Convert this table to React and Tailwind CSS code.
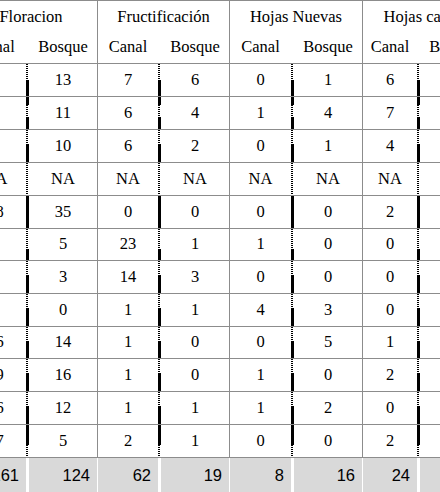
import React from "react";

const groups = [
  { name: "Floracion", canal: "w-[61px]" },
  { name: "Fructificación", canal: "w-[60px]" },
  { name: "Hojas Nuevas", canal: "w-[61px]" },
  { name: "Hojas caídas", canal: "w-[54px]" },
];

// canal / bosque pairs per group
const rows = [
  [9, 13, 7, 6, 0, 1, 6, 2],
  [9, 11, 6, 4, 1, 4, 7, 3],
  [8, 10, 6, 2, 0, 1, 4, 1],
  ["NA", "NA", "NA", "NA", "NA", "NA", "NA", "NA"],
  [38, 35, 0, 0, 0, 0, 2, 0],
  [9, 5, 23, 1, 1, 0, 0, 1],
  [3, 3, 14, 3, 0, 0, 0, 0],
  [7, 0, 1, 1, 4, 3, 0, 2],
  [26, 14, 1, 0, 0, 5, 1, 1],
  [19, 16, 1, 0, 1, 0, 2, 0],
  [16, 12, 1, 1, 1, 2, 0, 1],
  [17, 5, 2, 1, 0, 0, 2, 0],
];

const totals = [161, 124, 62, 19, 8, 16, 24, 12];

// content height of each row (border comes on top)
const heights = [32, 32, 32, 32, 32, 31, 32, 32, 31, 32, 32, 32];
const rowClass = [
  "h-[33px]", "h-[33px]", "h-[33px]", "h-[33px]", "h-[33px]", "h-[32px]",
  "h-[33px]", "h-[33px]", "h-[32px]", "h-[33px]", "h-[33px]", "h-[33px]",
];

// dotted (d) / solid (s) stretches of the thick Canal|Bosque line: [kind, from, to]
const patterns = [
  [["d", 0, 16], ["s", 16, 32]],
  [["s", 0, 8], ["d", 8, 20], ["s", 20, 32]],
  [["d", 0, 14], ["s", 14, 32]],
  [["d", 0, 32]],
  [["s", 0, 32]],
  [["d", 0, 20], ["s", 20, 31]],
  [["d", 0, 14], ["s", 14, 32]],
  [["d", 0, 14], ["s", 14, 32]],
  [["d", 0, 14], ["s", 14, 31]],
  [["d", 0, 14], ["s", 14, 32]],
  [["d", 0, 14], ["s", 14, 32]],
  [["s", 0, 20], ["d", 20, 32]],
];

const Divider = ({ pattern, height }) => (
  <svg width="3" height={height} className="block shrink-0">
    {pattern.map(([kind, y1, y2], i) =>
      kind === "s" ? (
        <line key={i} x1="1.5" x2="1.5" y1={y1} y2={y2} stroke="#000" strokeWidth="3" />
      ) : (
        <line
          key={i}
          x1="1"
          x2="1"
          y1={y1}
          y2={y2}
          stroke="#000"
          strokeWidth="2"
          strokeDasharray="1 1"
        />
      )
    )}
  </svg>
);

export default function App() {
  return (
    <div className="h-[492px] w-[440px] overflow-hidden bg-white">
      <div className="ml-[-35px] w-max font-['Liberation_Serif'] text-[16.5px] text-black">
        {/* Header */}
        <div className="flex border-y border-[#8c8c8c]">
          {groups.map((g) => (
            <div key={g.name} className="flex flex-col border-r border-[#8c8c8c]">
              <div className="flex h-[31px] items-center justify-center whitespace-nowrap pt-[2px]">
                {g.name}
              </div>
              <div className="flex h-[31px] items-center">
                <div className={`${g.canal} text-center`}>Canal</div>
                <div className="w-[3px]" />
                <div className="w-[68px] text-center">Bosque</div>
              </div>
            </div>
          ))}
        </div>

        {/* Data rows */}
        {rows.map((r, ri) => (
          <div key={ri} className={`flex ${rowClass[ri]} border-b border-[#8c8c8c]`}>
            {groups.map((g, gi) => (
              <div key={g.name} className="flex border-r border-[#8c8c8c]">
                <div className={`${g.canal} flex shrink-0 items-center justify-center`}>
                  {r[gi * 2]}
                </div>
                <Divider pattern={patterns[ri]} height={heights[ri]} />
                <div className="flex w-[68px] shrink-0 items-center justify-center">
                  {r[gi * 2 + 1]}
                </div>
              </div>
            ))}
          </div>
        ))}

        {/* Totals */}
        <div className="flex h-[34px] font-['Liberation_Sans']">
          {groups.map((g, gi) => (
            <div key={g.name} className="flex border-r-2 border-white">
              <div className={`${g.canal} flex items-center justify-end bg-[#d9d9d9] pr-[7px]`}>
                {totals[gi * 2]}
              </div>
              <div className="w-[3px] bg-white" />
              <div className="-mr-px flex w-[68px] items-center justify-end bg-[#d9d9d9] pr-[7px]">
                {totals[gi * 2 + 1]}
              </div>
            </div>
          ))}
        </div>
      </div>
    </div>
  );
}
